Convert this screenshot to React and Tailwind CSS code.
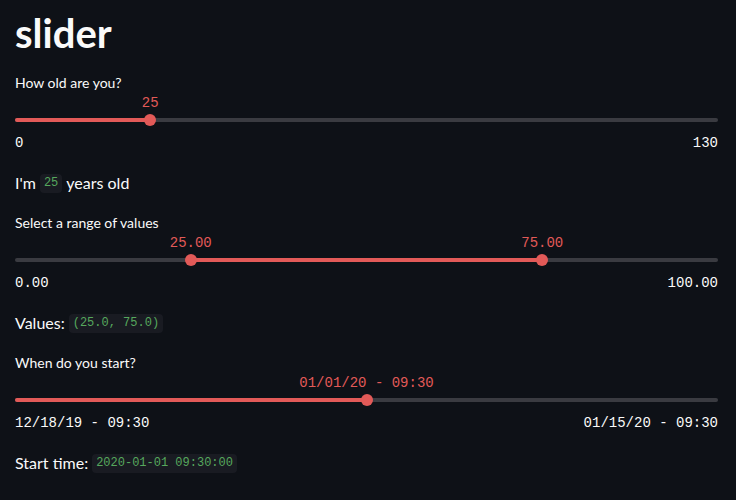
const RED = "#e25a58";

function Slider({ label, pos, labels, min, max, range }) {
  // pos: array of fractions 0..1
  const lo = range ? pos[0] : 0;
  const hi = range ? pos[1] : pos[0];
  return (
    <div className="flex flex-col">
      <div className="h-5 text-[14px] leading-5 text-[#fafafa]">{label}</div>
      <div className="relative h-5">
        {pos.map((p, i) => (
          <span
            key={i}
            className="absolute top-0 -translate-x-1/2 whitespace-nowrap font-['Liberation_Mono',monospace] text-[14px] leading-5 text-[#e25a58]"
            style={{ left: `${p * 100}%` }}
          >
            {labels[i]}
          </span>
        ))}
      </div>
      <div className="relative h-[14px]">
        <div className="absolute left-0 right-0 top-[5px] h-1 rounded-full bg-[#3a3b41]" />
        <div
          className="absolute top-[5px] h-1 rounded-full"
          style={{ left: `${lo * 100}%`, width: `${(hi - lo) * 100}%`, background: RED }}
        />
        {pos.map((p, i) => (
          <div
            key={i}
            className="absolute top-px h-3 w-3 -translate-x-1/2 rounded-full"
            style={{ left: `${p * 100}%`, background: RED }}
          />
        ))}
      </div>
      <div className="mt-[6px] flex h-5 justify-between font-['Liberation_Mono',monospace] text-[14px] leading-5 text-[#fafafa]">
        <span>{min}</span>
        <span>{max}</span>
      </div>
    </div>
  );
}

function Code({ children }) {
  return (
    <code className="mx-[4px] rounded bg-[#191b22] px-[4px] py-px font-['Liberation_Mono',monospace] text-[12px] leading-[17px] text-[#56a85d]">
      {children}
    </code>
  );
}

function Line({ children }) {
  return (
    <div className="mt-[18px] mb-[18px] flex h-6 items-center text-[16px] leading-6 text-[#fafafa]">
      {children}
    </div>
  );
}

export default function App() {
  return (
    <div className="min-h-[500px] bg-[#0e1117] pl-[15px] pr-[18px] font-['Lato','Noto_Sans',sans-serif]">
      <h1 className="pt-[10px] mb-[17px] text-[40px] font-bold leading-[46px] text-[#fafafa]">slider</h1>

      <Slider label="How old are you?" pos={[25 / 130]} labels={["25"]} min="0" max="130" />
      <Line>
        I'm<Code>25</Code>years old
      </Line>

      <Slider
        label="Select a range of values"
        pos={[0.25, 0.75]}
        labels={["25.00", "75.00"]}
        min="0.00"
        max="100.00"
        range
      />
      <Line>
        Values:<Code>(25.0, 75.0)</Code>
      </Line>

      <Slider
        label="When do you start?"
        pos={[0.5]}
        labels={["01/01/20 - 09:30"]}
        min="12/18/19 - 09:30"
        max="01/15/20 - 09:30"
      />
      <Line>
        Start time:<Code>2020-01-01 09:30:00</Code>
      </Line>
    </div>
  );
}
